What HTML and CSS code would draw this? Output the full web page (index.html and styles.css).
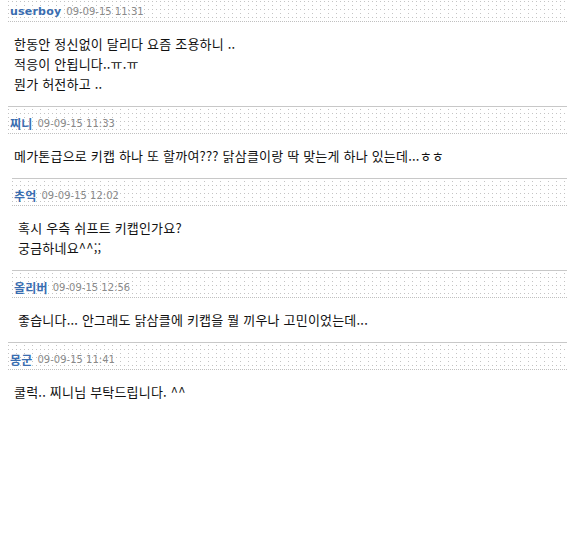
FILE: index.html
```html
<!DOCTYPE html>
<html lang="ko">
<head>
  <meta charset="UTF-8" />
  <title>댓글</title>
  <link rel="stylesheet" href="styles.css">
</head>
<body>

<div class="comments">
  <div class="comment first">
    <div class="head"><span class="name">userboy</span> <span class="date">09-09-15 11:31</span></div>
    <div class="body">
      <p>한동안 정신없이 달리다 요즘 조용하니 ..</p>
      <p>적응이 안됩니다..ㅠ.ㅠ</p>
      <p>뭔가 허전하고 ..</p>
    </div>
  </div>

  <div class="comment">
    <div class="head"><span class="name ko">찌니</span> <span class="date">09-09-15 11:33</span></div>
    <div class="body">
      <p>메가톤급으로 키캡 하나 또 할까여??? 닭삼클이랑 딱 맞는게 하나 있는데...ㅎㅎ</p>
    </div>
  </div>

  <div class="comment reply">
    <div class="head"><span class="name ko">추억</span> <span class="date">09-09-15 12:02</span></div>
    <div class="body">
      <p>혹시 우측 쉬프트 키캡인가요?</p>
      <p>궁금하네요^^;;</p>
    </div>
  </div>

  <div class="comment reply">
    <div class="head"><span class="name ko">올리버</span> <span class="date">09-09-15 12:56</span></div>
    <div class="body">
      <p>좋습니다... 안그래도 닭삼클에 키캡을 뭘 끼우나 고민이었는데...</p>
    </div>
  </div>

  <div class="comment">
    <div class="head"><span class="name ko">몽군</span> <span class="date">09-09-15 11:41</span></div>
    <div class="body">
      <p>쿨럭.. 찌니님 부탁드립니다. ^^</p>
    </div>
  </div>
</div>

</body>
</html>
```

FILE: styles.css
```css
body {
  margin: 0;
  background: #fff;
  font-family: "Noto Sans CJK KR", "DejaVu Sans", sans-serif;
  font-size: 13px;
  color: #111;
}
.comments {
  padding-left: 8px;
}
.comment {
  border-top: 1px solid #c8c8c8;
}
/* the first comment is cut off at the top of the frame */
.comment.first {
  border-top: none;
  margin-top: -5px;
}
.head {
  height: 27px;
  padding: 6px 0 0 2px;
  box-sizing: border-box;
  display: flex;
  align-items: center;
  gap: 5px;
  background-image:
    conic-gradient(from 270deg at 1px 1px, #c4c4c4 90deg, transparent 0),
    conic-gradient(from 270deg at 1px 1px, #c4c4c4 90deg, transparent 0);
  background-size: 8px 8px, 4px 8px;
  background-position: 0 2px, 0 6px;
  border-bottom: 1px dotted #c0c0c0;
}
.name {
  color: #3a6db0;
  font-weight: bold;
  font-family: "DejaVu Sans", "Noto Sans CJK KR", sans-serif;
  font-size: 11px;
  letter-spacing: 0.2px;
}
.name.ko {
  font-family: "Noto Sans CJK KR", sans-serif;
  font-size: 12px;
}
.date {
  color: #8a8a8a;
  font-family: "DejaVu Sans", sans-serif;
  font-size: 10px;
}
.body {
  padding: 12px 6px 12px;
}
.body p {
  margin: 0;
  line-height: 20px;
  letter-spacing: 0.2px;
}
.reply {
  margin-left: 4px;
}
.reply .body {
  padding-left: 6px;
}
```
